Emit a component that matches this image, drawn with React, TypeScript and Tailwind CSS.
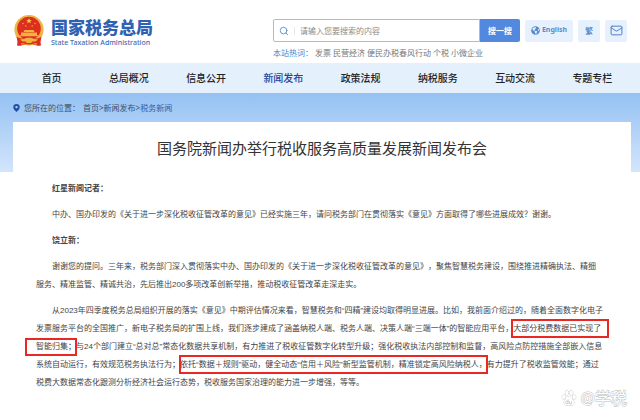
import React from 'react';
import { Mail, Search } from 'lucide-react';
import { FaGlobeAmericas } from 'react-icons/fa';

const navItems = ['首页', '总局概况', '信息公开', '新闻发布', '政策法规', '纳税服务', '互动交流', '专题专栏'];
const hotWords = ['发票', '民营经济', '便民办税春风行动', '个税', '小微企业'];

const Emblem: React.FC = () => (
  <svg viewBox="0 0 30 33" className="h-[33px] w-[30px] shrink-0" aria-hidden="true">
    <circle cx="15" cy="15.5" r="14.6" fill="#efb544" />
    <circle cx="15" cy="14.5" r="11.800" fill="#dd2f20" />
    <path d="M15 4.200l.8 1.700 1.900.2-1.400 1.200.4 1.900-1.700-1-1.700 1 .4-1.900-1.400-1.200 1.900-.2z" fill="#f7c948" />
    <circle cx="9" cy="9.500" r=".8" fill="#f0a53a" />
    <circle cx="21" cy="9.500" r=".8" fill="#f0a53a" />
    <circle cx="11.800" cy="12" r=".8" fill="#f0a53a" />
    <circle cx="18.200" cy="12" r=".8" fill="#f0a53a" />
    <path d="M10.500 16h9l1 2h-11zM7 18.500h16v2.500h1v1.200h-18v-1.200h1z" fill="#f3b23e" />
    <path d="M2.500 22.500c3 2 6 2.500 8.500 1.800h8c3 .7 6 0 8.500-1.800l-1 5.500.5 3.500c-2 .6-4 .4-5.500-.5h-13c-1.500.9-3.500 1.100-5.500.5l.5-3.500z" fill="#dd2f20" />
    <path d="M10 25c2-1.800 8-1.800 10 0l4 .5-2.500 2h-3l-1.500 1.500h-4l-1.500-1.500h-3l-2.500-2z" fill="#f3b23e" />
    <path d="M7 30c3-.8 4.500 1 8 1s5-1.800 8-1" stroke="#f3b23e" strokeWidth="1" fill="none" />
  </svg>
);

// text marked with a red frame; the frame is drawn around it without moving the line
const Highlight: React.FC<{ children: React.ReactNode; frame: string }> = ({ children, frame }) => (
  <span className="relative inline-block indent-0">
    {children}
    <span className={`absolute border-2 border-[#ea2723] ${frame}`} />
  </span>
);

const Header: React.FC = () => (
  <header className="flex h-[63px] items-start justify-between bg-white pr-[13px] pl-[14px]">
    <div className="flex gap-[7px] pt-[14px]">
      <Emblem />
      <div className="pt-1">
        <div className="text-[17px] leading-5 font-black text-[#2f62b2]">国家税务总局</div>
        <div className="text-[7px] leading-[10px] font-medium text-[#3f6cb3]">State Taxation Administration</div>
      </div>
    </div>

    <div className="pt-[19px]">
      <div className="flex h-[23px] items-center">
        <form className="flex h-full" onSubmit={(e) => e.preventDefault()}>
          <div className="flex w-[207px] items-center rounded-l-xs border border-[#a3bedd] pl-[5px]">
            <Search className="size-[10px] text-[#4a86cc]" strokeWidth={2} />
            <span className="mx-[5px] h-2 border-l border-gray-200" />
            <input
              type="text"
              aria-label="搜索"
              placeholder="请输入您要搜索的内容"
              className="min-w-0 flex-1 text-[8px] outline-none placeholder:text-[#8b8b8b]"
            />
          </div>
          <button type="submit" className="w-10 rounded-r-xs bg-[#5289df] text-[8px] font-bold text-white">
            搜一搜
          </button>
        </form>
        <button type="button" className="ml-[5px] flex h-[22px] w-12 items-center justify-center gap-[2px] rounded-xs bg-[#e7f1fd] text-[7px] font-bold text-[#5b8acb]">
          <FaGlobeAmericas className="size-[9px]" />
          English
        </button>
        <button type="button" className="ml-[5px] h-[22px] w-[22px] rounded-xs bg-[#e7f1fd] text-[8px] font-bold text-[#5b8acb]">
          繁
        </button>
        <button type="button" aria-label="邮箱" className="ml-[5px] flex h-[22px] w-[22px] items-center justify-center rounded-xs bg-[#e7f1fd] text-[#4a7cc4]">
          <Mail className="size-[13px]" strokeWidth={1.8} />
        </button>
      </div>
      <div className="mt-[5px] flex gap-[2px] text-[8px] leading-3 text-[#777]">
        <span className="text-[#4a86cc]">本站热词：</span>
        {hotWords.map((word) => (
          <a key={word} href="#">{word}</a>
        ))}
      </div>
    </div>
  </header>
);

const App: React.FC = () => {
  return (
    <div className="relative min-h-[420px] overflow-hidden bg-white font-['Noto_Sans','Noto_Sans_CJK_SC',sans-serif] text-[#444] [text-spacing-trim:space-all]" lang="zh-CN">
      <Header />

      <nav className="grid h-[30px] grid-cols-8 items-center bg-[#e5f0fd] pr-[9px] pl-[13px] text-center text-[10px] font-medium text-[#222]">
        {navItems.map((item) => (
          <a key={item} href="#" className={item === '新闻发布' ? 'text-[#1d459c]' : ''}>
            {item}
          </a>
        ))}
      </nav>

      <main className="bg-[linear-gradient(#94c1f3,#d3e5fb)] bg-[length:100%_79px] bg-no-repeat pr-[9px] pl-[13px]">
        <div className="flex h-[29px] items-center text-[8px] text-[#3c4f68]">
          <svg viewBox="0 0 8 10" className="mr-[4px] h-2 w-[7px]" aria-hidden="true">
            <path d="M4 0a4 4 0 0 1 4 4c0 2.500-2.500 4.300-4 6-1.500-1.700-4-3.500-4-6a4 4 0 0 1 4-4z" fill="#1f50a8" />
            <circle cx="4" cy="3.900" r="1.500" fill="#b5d3f7" />
          </svg>
          <span className="mr-[3px]">您所在的位置：</span>
          <a href="#">首页</a>&gt;<a href="#">新闻发布</a>&gt;
          <a href="#" className="text-[#2a5fb0]">税务新闻</a>
        </div>

        <article className="bg-white pt-[14px] pb-7">
          <h1 className="text-center text-[15px] leading-6 text-[#333]">国务院新闻办举行税收服务高质量发展新闻发布会</h1>

          <div className="mt-5 space-y-2 pl-[23px] font-['Liberation_Sans','Noto_Sans_CJK_SC',sans-serif] indent-[16px] text-[8px] leading-[18px] whitespace-nowrap">
            <p className="font-bold">红星新闻记者：</p>
            <p>中办、国办印发的《关于进一步深化税收征管改革的意见》已经实施三年，请问税务部门在贯彻落实《意见》方面取得了哪些进展成效？谢谢。</p>
            <p className="font-bold">饶立新：</p>
            <p>
              谢谢您的提问。三年来，税务部门深入贯彻落实中办、国办印发的《关于进一步深化税收征管改革的意见》，聚焦智慧税务建设，围绕推进精确执法、精细
              <br />
              服务、精准监管、精诚共治，先后推出200多项改革创新举措，推动税收征管改革走深走实。
            </p>
            <p>
              从2023年四季度税务总局组织开展的落实《意见》中期评估情况来看，智慧税务和“四精”建设均取得明显进展。比如，我前面介绍过的，随着全面数字化电子
              <br />
              发票服务平台的全国推广，新电子税务局的扩围上线，我们逐步建成了涵盖纳税人端、税务人端、决策人端“三端一体”的智能应用平台，<Highlight frame="-top-px -right-2 bottom-0 -left-[2px]">大部分税费数据已实现了</Highlight>
              <br />
              <Highlight frame="top-0 -right-px bottom-0 -left-[11px]">智能归集；</Highlight>与24个部门建立“总对总”常态化数据共享机制，有力推进了税收征管数字化转型升级；强化税收执法内部控制和监督，高风险点防控措施全部嵌入信息
              <br />
              系统自动运行，有效规范税务执法行为；<Highlight frame="-top-px -right-px bottom-0 -left-px">依托“数据＋规则”驱动，健全动态“信用＋风险”新型监管机制，精准锁定高风险纳税人，</Highlight>有力提升了税收监管效能；通过
              <br />
              税费大数据常态化跟测分析经济社会运行态势，税收服务国家治理的能力进一步增强，等等。
            </p>
          </div>
        </article>
      </main>

      <div className="absolute right-[13px] bottom-[10px] flex items-center gap-[4px] text-[16px] leading-6 text-white [-webkit-text-stroke:1px_#bbb] [paint-order:stroke_fill]">
        <svg viewBox="0 0 16 17" className="size-4" fill="#fff" stroke="#bbb" strokeWidth=".8" aria-hidden="true">
          <ellipse cx="2.500" cy="7.500" rx="1.800" ry="2.400" />
          <ellipse cx="5.800" cy="3" rx="1.800" ry="2.500" />
          <ellipse cx="10.300" cy="3" rx="1.800" ry="2.500" />
          <ellipse cx="13.500" cy="7.500" rx="1.800" ry="2.400" />
          <path d="M8 7c2 0 2.500 2 4 3.300 1.800 1.500 2 5.700-1.200 5.900-1.300 0-1.600-.4-2.800-.4s-1.500.4-2.800.4c-3.200-.2-3-4.400-1.200-5.900 1.500-1.300 2-3.300 4-3.300z" />
          <path d="M7 10v4.500h-1.500a1.200 1.200 0 0 1 0-2.500h1.500M8.500 12v2a.6.6 0 0 0 .6.6h1.600V12" fill="none" />
        </svg>
        <span>@学税</span>
      </div>
    </div>
  );
};

export default App;
